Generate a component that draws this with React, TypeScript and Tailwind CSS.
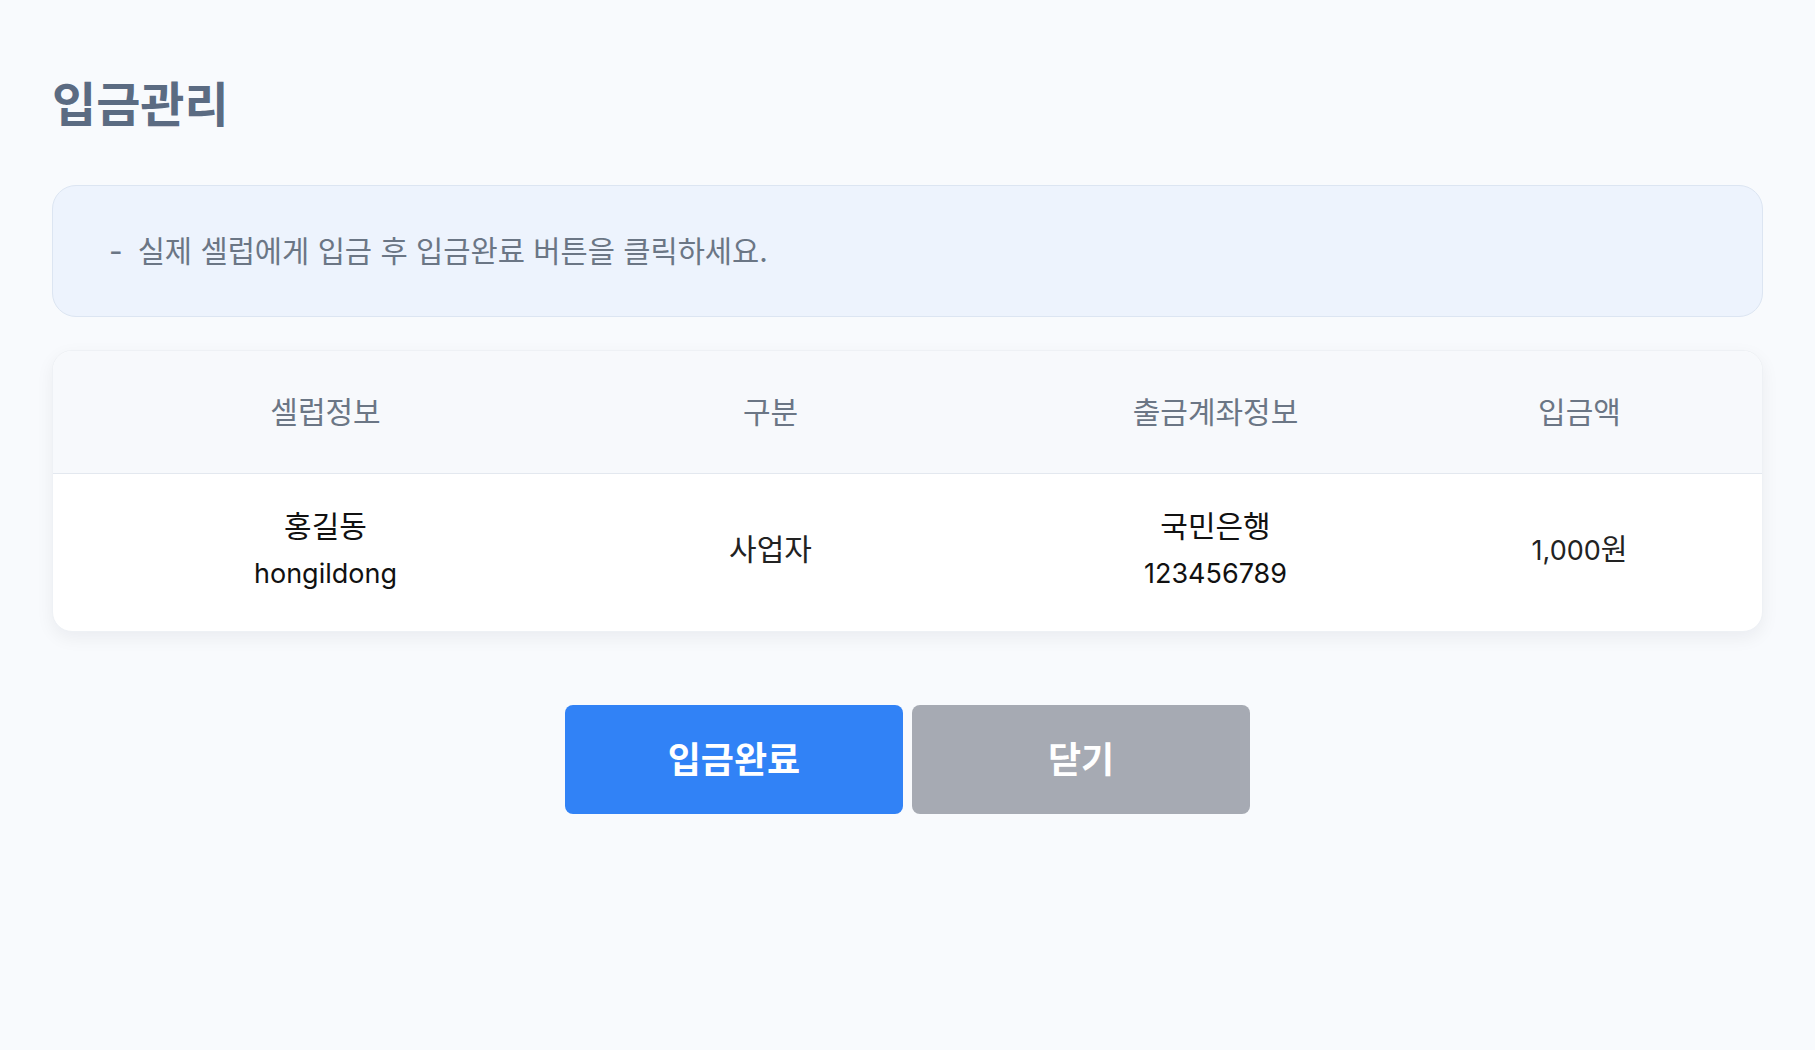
export default function App() {
  const font = { fontFamily: 'Inter, "Noto Sans CJK KR", sans-serif' }

  return (
    <main style={font} className="min-h-screen bg-[#f8fafd] px-[52px] pt-[78px] pb-20">
      {/* 제목 */}
      <h1 className="text-[48px] font-bold leading-[54px] text-[#5b6b82]">입금관리</h1>

      {/* 안내 박스 */}
      <div className="mt-[53px] flex h-[132px] items-center rounded-[24px] border border-[#dce5f2] bg-[#edf3fd] pl-[56px] text-[29.6px] text-[#6b7685]">
        <span>-</span>
        <span className="ml-[15px]">실제 셀럽에게 입금 후 입금완료 버튼을 클릭하세요.</span>
      </div>

      {/* 입금 정보 테이블 */}
      <div className="mt-[33px] overflow-hidden rounded-[20px] border border-[#eef1f5] bg-white shadow-[0_6px_18px_rgba(15,23,42,0.06)]">
        <div className="grid h-[123px] grid-cols-[445px_445px_445px_283px] items-center border-b border-[#e3e8ef] bg-[#f7f9fc] pl-[50px] text-center text-[30px] text-[#6b7685]">
          <div>셀럽정보</div>
          <div>구분</div>
          <div>출금계좌정보</div>
          <div>입금액</div>
        </div>
        <div className="grid h-[157px] grid-cols-[445px_445px_445px_283px] items-center pb-[6px] pl-[50px] text-center text-[27px] leading-[47px] text-[#111]">
          <div>
            <div className="text-[30px]">홍길동</div>
            <div>hongildong</div>
          </div>
          <div className="text-[30px] text-[#222]">사업자</div>
          <div>
            <div className="text-[30px]">국민은행</div>
            <div>123456789</div>
          </div>
          <div className="text-[#222]">
            1,000<span className="text-[29px]">원</span>
          </div>
        </div>
      </div>

      {/* 버튼 */}
      <div className="mt-[73px] flex justify-center gap-[9px]">
        <button className="h-[109px] w-[338px] rounded-[8px] bg-[#3182f6] text-[36px] font-bold text-white">
          입금완료
        </button>
        <button className="h-[109px] w-[338px] rounded-[8px] bg-[#a6aab3] text-[36px] font-bold text-white">
          닫기
        </button>
      </div>
    </main>
  )
}
